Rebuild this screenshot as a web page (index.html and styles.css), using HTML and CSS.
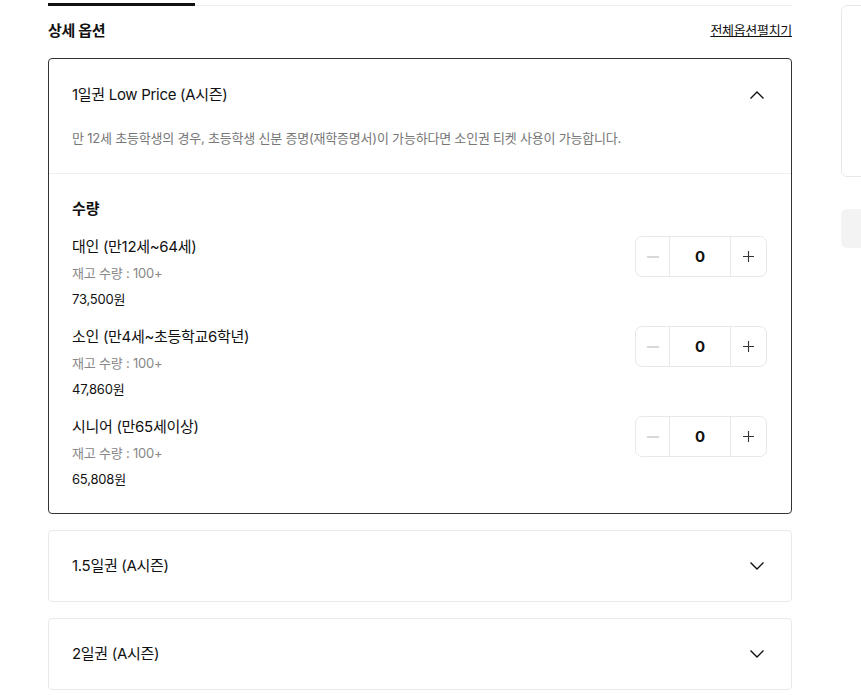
FILE: index.html
```html
<!DOCTYPE html>
<html lang="ko">
<head>
<meta charset="utf-8">
<title>상세 옵션</title>
<link rel="stylesheet" href="styles.css">
</head>
<body>
<div class="page">
  <main class="main">
    <div class="tabs"><div class="tab-active"></div></div>
    <div class="section-head">
      <h2 class="section-title">상세 옵션</h2>
      <a class="expand-all" href="#">전체옵션펼치기</a>
    </div>

    <div class="option open">
      <div class="opt-head">
        <span class="opt-title">1일권 Low Price (A시즌)</span>
        <svg class="chev" width="16" height="10" viewBox="0 0 16 10"><path d="M1.5 8.5 L8 2 L14.5 8.5" fill="none" stroke="#111" stroke-width="1.4"/></svg>
      </div>
      <p class="opt-desc">만 12세 초등학생의 경우, 초등학생 신분 증명(재학증명서)이 가능하다면 소인권 티켓 사용이 가능합니다.</p>
      <div class="qty">
        <div class="qty-title">수량</div>
        <div class="item">
          <div class="item-info">
            <div class="item-name">대인 (만12세~64세)</div>
            <div class="item-stock">재고 수량 : 100+</div>
            <div class="item-price">73,500원</div>
          </div>
          <div class="stepper">
            <span class="step minus"><svg width="12" height="12" viewBox="0 0 12 12"><path d="M0 6 H12" stroke="#cfcfcf" stroke-width="1.6"/></svg></span>
            <span class="step val">0</span>
            <span class="step plus"><svg width="11" height="11" viewBox="0 0 11 11"><path d="M0 5.5 H11 M5.5 0 V11" stroke="#333" stroke-width="1.1"/></svg></span>
          </div>
        </div>
        <div class="item">
          <div class="item-info">
            <div class="item-name">소인 (만4세~초등학교6학년)</div>
            <div class="item-stock">재고 수량 : 100+</div>
            <div class="item-price">47,860원</div>
          </div>
          <div class="stepper">
            <span class="step minus"><svg width="12" height="12" viewBox="0 0 12 12"><path d="M0 6 H12" stroke="#cfcfcf" stroke-width="1.6"/></svg></span>
            <span class="step val">0</span>
            <span class="step plus"><svg width="11" height="11" viewBox="0 0 11 11"><path d="M0 5.5 H11 M5.5 0 V11" stroke="#333" stroke-width="1.1"/></svg></span>
          </div>
        </div>
        <div class="item">
          <div class="item-info">
            <div class="item-name">시니어 (만65세이상)</div>
            <div class="item-stock">재고 수량 : 100+</div>
            <div class="item-price">65,808원</div>
          </div>
          <div class="stepper">
            <span class="step minus"><svg width="12" height="12" viewBox="0 0 12 12"><path d="M0 6 H12" stroke="#cfcfcf" stroke-width="1.6"/></svg></span>
            <span class="step val">0</span>
            <span class="step plus"><svg width="11" height="11" viewBox="0 0 11 11"><path d="M0 5.5 H11 M5.5 0 V11" stroke="#333" stroke-width="1.1"/></svg></span>
          </div>
        </div>
      </div>
    </div>

    <div class="option closed">
      <div class="opt-head">
        <span class="opt-title">1.5일권 (A시즌)</span>
        <svg class="chev" width="16" height="10" viewBox="0 0 16 10"><path d="M1.5 1.5 L8 8 L14.5 1.5" fill="none" stroke="#111" stroke-width="1.4"/></svg>
      </div>
    </div>

    <div class="option closed">
      <div class="opt-head">
        <span class="opt-title">2일권 (A시즌)</span>
        <svg class="chev" width="16" height="10" viewBox="0 0 16 10"><path d="M1.5 1.5 L8 8 L14.5 1.5" fill="none" stroke="#111" stroke-width="1.4"/></svg>
      </div>
    </div>
  </main>

  <aside class="side">
    <div class="side-box"></div>
    <div class="side-btn"></div>
  </aside>
</div>
</body>
</html>
```

FILE: styles.css
```css
* { box-sizing: border-box; }
html, body { margin: 0; padding: 0; background: #fff; overflow: hidden; }
body {
  font-family: Inter, "Noto Sans CJK KR", sans-serif;
  color: #111;
}
.page {
  display: flex;
  gap: 49px;
  padding-left: 48px;
  width: 1200px;
}
.main { width: 744px; flex: none; }

.tabs {
  height: 6px;
  border-bottom: 1px solid #eeeeee;
  display: flex;
  align-items: flex-end;
}
.tab-active {
  width: 147px;
  height: 3px;
  background: #111;
  margin-bottom: -1px;
}

.section-head {
  display: flex;
  justify-content: space-between;
  align-items: center;
  height: 40px;
  margin-top: 3px;
  margin-bottom: 9px;
}
.section-title {
  margin: 0;
  font-size: 15px;
  font-weight: 700;
  letter-spacing: -0.3px;
}
.expand-all {
  font-size: 13px;
  color: #111;
  text-decoration: underline;
  letter-spacing: -0.3px;
}

.option {
  border: 1px solid #e9e9e9;
  border-radius: 4px;
  margin-bottom: 16px;
}
.option.open { border-color: #333; }

.opt-head {
  display: flex;
  justify-content: space-between;
  align-items: center;
  height: 22px;
  padding: 0 26px 0 23px;
  margin-top: 25px;
  box-sizing: content-box;
}
.closed .opt-head { margin: 24px 0; }
.opt-title {
  font-size: 15px;
  line-height: 22px;
  letter-spacing: -0.3px;
}
.chev { display: block; }

.opt-desc {
  margin: 22px 0 0;
  padding: 0 23px 25px;
  font-size: 13px;
  line-height: 20px;
  color: #777;
  letter-spacing: -0.2px;
  border-bottom: 1px solid #eeeeee;
}

.qty { padding: 24px 24px 24px 23px; }
.qty-title {
  font-size: 15px;
  line-height: 22px;
  font-weight: 700;
  margin-bottom: 16px;
}
.item {
  display: flex;
  justify-content: space-between;
  align-items: flex-start;
  margin-bottom: 17px;
}
.item:last-child { margin-bottom: 0; }
.item-name { font-size: 15px; line-height: 22px; letter-spacing: -0.3px; }
.item-stock { font-size: 13px; line-height: 20px; color: #888; margin-top: 5px; letter-spacing: -0.2px; }
.item-price { font-size: 13px; line-height: 20px; margin-top: 6px; letter-spacing: -0.2px; }

.stepper {
  display: flex;
  height: 41px;
  border: 1px solid #e8e8e8;
  border-radius: 7px;
}
.step {
  display: flex;
  align-items: center;
  justify-content: center;
}
.step svg { display: block; }
.minus { width: 34px; border-right: 1px solid #e8e8e8; }
.val { width: 61px; font-size: 15px; font-weight: 700; border-right: 1px solid #e8e8e8; }
.plus { width: 35px; }

.side { width: 300px; flex: none; padding-top: 5px; }
.side-box {
  height: 172px;
  border: 1px solid #e8e8e8;
  border-radius: 6px;
}
.side-btn {
  margin-top: 32px;
  height: 39px;
  background: #f3f3f3;
  border-radius: 6px;
}
```
